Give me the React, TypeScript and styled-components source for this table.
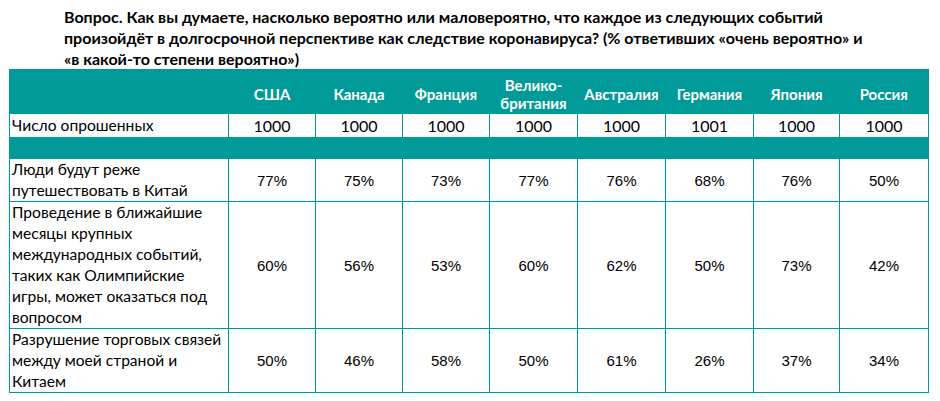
import React from "react";
import styled, { createGlobalStyle } from "styled-components";

const Global = createGlobalStyle`
  html, body { margin: 0; padding: 0; background: #fff; }
  body { font-family: Lato, "Liberation Sans", sans-serif; color: #000; }
`;

const TEAL = "#009a98";

const Page = styled.div`
  width: 940px;
  height: 401px;
  overflow: hidden;
  padding: 6px 0 0 9px;
  box-sizing: border-box;
`;

const Title = styled.h1`
  margin: 0 0 0 55px;
  font-family: Lato, "Liberation Sans", sans-serif;
  font-weight: 700;
  font-size: 16px;
  line-height: 21px;
  color: #000;
`;

const Table = styled.table`
  border-collapse: collapse;
  table-layout: fixed;
  width: 919px;
  border: 1px solid ${TEAL};
`;

const HeadRow = styled.tr`
  height: 44px;
  background: ${TEAL};
`;

const HeadCell = styled.th`
  padding: 4px 0 0;
  color: #fff;
  font-weight: 700;
  font-size: 15px;
  line-height: 18px;
  text-align: center;
  vertical-align: middle;
`;

const SpacerRow = styled.tr`
  height: 21px;
  background: ${TEAL};
  td { padding: 0; }
`;

const Row = styled.tr<{ $h: number }>`
  height: ${(p) => p.$h}px;
`;

const Label = styled.td`
  border: 1px solid ${TEAL};
  padding: 0 0 0 2px;
  font-size: 15.6px;
  line-height: 21px;
  vertical-align: middle;
  text-align: left;
  white-space: nowrap;
`;

const CountCell = styled.td`
  border: 1px solid ${TEAL};
  padding: 0;
  font-size: 16px;
  line-height: 21px;
  text-align: center;
  vertical-align: middle;
`;

const PctCell = styled.td`
  border: 1px solid ${TEAL};
  padding: 0;
  font-family: "Liberation Sans", Arial, sans-serif;
  font-size: 15px;
  text-align: center;
  vertical-align: middle;
`;

const colWidths = [219, 87, 87, 87, 88, 88, 88, 86, 89];

const countries: React.ReactNode[] = [
  "США",
  "Канада",
  "Франция",
  <>Велико-<br />британия</>,
  "Австралия",
  "Германия",
  "Япония",
  "Россия",
];

const counts = ["1000", "1000", "1000", "1000", "1000", "1001", "1000", "1000"];

const rows: { label: React.ReactNode; h: number; values: string[] }[] = [
  {
    label: <>Люди будут реже<br />путешествовать в Китай</>,
    h: 42,
    values: ["77%", "75%", "73%", "77%", "76%", "68%", "76%", "50%"],
  },
  {
    label: (
      <>
        Проведение в ближайшие<br />месяцы крупных<br />международных событий,<br />таких как Олимпийские<br />игры, может оказаться под<br />вопросом
      </>
    ),
    h: 127,
    values: ["60%", "56%", "53%", "60%", "62%", "50%", "73%", "42%"],
  },
  {
    label: <>Разрушение торговых связей<br />между моей страной и<br />Китаем</>,
    h: 64,
    values: ["50%", "46%", "58%", "50%", "61%", "26%", "37%", "34%"],
  },
];

export default function App() {
  return (
    <Page>
      <Global />
      <Title>
        Вопрос. Как вы думаете, насколько вероятно или маловероятно, что каждое из следующих событий
        <br />
        произойдёт в долгосрочной перспективе как следствие коронавируса? (% ответивших «очень вероятно» и
        <br />
        «в какой-то степени вероятно»)
      </Title>
      <Table>
        <colgroup>
          {colWidths.map((w, i) => (
            <col key={i} style={{ width: w }} />
          ))}
        </colgroup>
        <tbody>
          <HeadRow>
            <HeadCell />
            {countries.map((c, i) => (
              <HeadCell key={i}>{c}</HeadCell>
            ))}
          </HeadRow>
          <Row $h={24}>
            <Label>Число опрошенных</Label>
            {counts.map((c, i) => (
              <CountCell key={i}>{c}</CountCell>
            ))}
          </Row>
          <SpacerRow>
            <td colSpan={9} />
          </SpacerRow>
          {rows.map((r, i) => (
            <Row key={i} $h={r.h}>
              <Label>{r.label}</Label>
              {r.values.map((v, j) => (
                <PctCell key={j}>{v}</PctCell>
              ))}
            </Row>
          ))}
        </tbody>
      </Table>
    </Page>
  );
}
